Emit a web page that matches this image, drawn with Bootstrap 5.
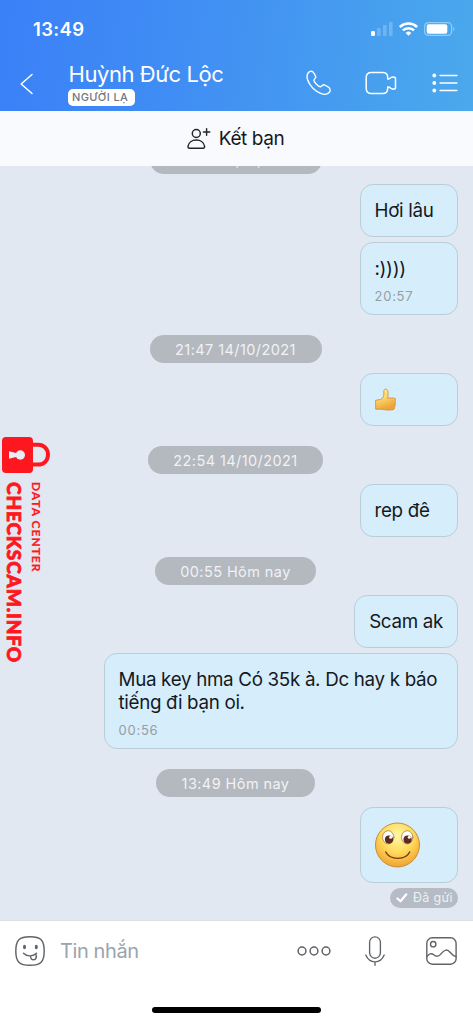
<!DOCTYPE html>
<html lang="vi">
<head>
<meta charset="utf-8">
<meta name="viewport" content="width=device-width, initial-scale=1">
<title>Huỳnh Đức Lộc</title>
<link href="https://cdn.jsdelivr.net/npm/bootstrap@5.3.0/dist/css/bootstrap.min.css" rel="stylesheet">
<style>
body{font-family:Inter,"Liberation Sans",sans-serif;background:#fff;color:#15191d}
svg{display:block;flex:none;fill:none;stroke-linecap:round;stroke-linejoin:round}
.screen{height:1024px;overflow:hidden}
.topbar{height:111px;background:linear-gradient(97deg,#3a80f8 0%,#4190f3 45%,#4ba9ec 100%);color:#fff}
.status{height:58px;padding:0 18px 0 33px}
.clock{font-size:18.5px;font-weight:600;line-height:24px;letter-spacing:.35px}
.titlebar{height:53px;padding:0 15px 0 20px}
.back{margin-top:15px}
.who{margin-left:35px;padding-top:3px}
.who-name{font-size:22px;line-height:26px;letter-spacing:-.43px;font-weight:400;padding-left:.5px}
.tag{width:67px;height:17px;margin-top:2px;border-radius:5px;background:#fff;color:#70777f;font-size:11px;line-height:17px;font-weight:500;letter-spacing:.4px;padding-left:4px}
.actions{padding-top:12px}
.friendbar{height:55px;background:#f9fafe;font-size:19px;letter-spacing:-.42px;padding:1px 2px 0 0}
.chat{height:754px;background:#e2e8f1;padding:0 15px 0 13px;overflow:hidden}
.stamp{height:28px;line-height:29px;border-radius:14px;background:#b4b8bf;color:#f0f2f5;font-size:14.5px;letter-spacing:.42px;margin:20px 0 10px;flex:none}
.stamp.first{margin-top:-20px}
.bubble{border:1px solid #b9ced7;border-radius:13px;background:#d6eefc;min-width:98.5px;padding:14px;font-size:18.8px;line-height:23px;letter-spacing:-.32px;flex:none}
.bubble + .bubble{margin-top:5px}
.bubble.timed{padding-bottom:8px}
.time{font-size:13px;line-height:20px;margin-top:6px;color:#969da1;letter-spacing:.75px}
.sent{width:68px;height:20px;border-radius:10px;background:#b5bcc5;color:#eef1f4;font-size:12.5px;letter-spacing:.3px;line-height:20px;margin-top:5px;padding-left:6px;gap:5px;flex:none}
.composer{height:104px;border-top:1px solid #dde1e6;padding-top:1px}
.tools{height:58px;padding:0 16px 0 15px;stroke:#606468}
.hint{font-size:20px;color:#9aa4ad;letter-spacing:-.4px;margin-left:15px}
.homebar{width:169px;height:6px;border-radius:3px;background:#000;margin-top:27px}
.mark-side{left:0;top:436px;color:#ff1720;font-family:Lato,sans-serif}
.mark-side .words{writing-mode:vertical-rl;height:190px;margin:8px 0 0 3px}
.brand-a{font-size:12px;line-height:16px;font-weight:700;letter-spacing:1px;-webkit-text-stroke:.2px #ff1720}
.brand-b{font-size:19px;line-height:22px;font-weight:900;letter-spacing:.86px;margin-right:3px;-webkit-text-stroke:.8px #ff1720}
</style>
</head>
<body>
<main class="screen position-relative d-flex flex-column">
  <header class="topbar flex-shrink-0">
    <div class="status d-flex align-items-center justify-content-between">
      <span class="clock">13:49</span>
      <div class="d-flex align-items-center">
        <svg width="22" height="14" viewBox="0 0 22 14"><g fill="#fff"><rect y="9" width="4" height="5" rx="1.2"/><g opacity=".22"><rect x="6" y="6" width="3.600" height="8" rx="1"/><rect x="12" y="3" width="3.600" height="11" rx="1"/><rect x="18" y="0" width="3.600" height="14" rx="1"/></g></g></svg>
        <svg width="19" height="14" viewBox="0 0 18 14" preserveAspectRatio="none" stroke="#fff" stroke-width="2.500" style="margin-left:6px;stroke-linecap:butt"><path d="M.8 5a11.6 11.6 0 0 1 16.400 0M3.700 8.400a7.400 7.400 0 0 1 10.600 0"/><path d="M6.300 10.900a3.800 3.800 0 0 1 5.400 0L9 13.700z" fill="#fff" stroke="none"/></svg>
        <svg width="31" height="14" viewBox="0 0 31 14" style="margin-left:6px"><rect x=".6" y=".6" width="27" height="12.800" rx="3.800" stroke="#fff" stroke-opacity=".42" stroke-width="1.200"/><rect x="2.700" y="2.300" width="20.600" height="9.400" rx="2" fill="#fff"/><path d="M29.300 5v4c1.500-.6 1.500-3.400 0-4z" fill="#fff" opacity=".45"/></svg>
      </div>
    </div>
    <div class="titlebar d-flex">
      <svg class="back" width="13" height="22" viewBox="0 0 13 22" stroke="#fff" stroke-width="1.500"><path d="M12 1.500 1.200 11 12 20.500"/></svg>
      <div class="who flex-grow-1">
        <div class="who-name text-nowrap">Huỳnh Đức Lộc</div>
        <div class="tag text-nowrap">NGƯỜI LẠ</div>
      </div>
      <div class="actions d-flex align-items-start">
        <svg width="26" height="26" viewBox="0 0 26 26" stroke="#fff" stroke-width="1.400"><path d="M2.200 2.800C3.300 1.300 5.500.8 7 2c1.200 1 2.100 2.900 2.700 4.600.5 1.400-1.900 2.400-1.800 3.900.1 1.700 4.500 6.100 6.300 6.200 1.600.1 2.300-2.400 3.900-1.900 1.800.6 4 1.800 5.100 3 1.200 1.400 1.400 3.700-.2 5-1.900 1.600-4.700 2-7.800.8C9.300 21.500 3.500 15.800 1.600 9.800.8 7.200.9 4.500 2.200 2.800z"/></svg>
        <svg width="32" height="24" viewBox="0 0 32 24" stroke="#fff" stroke-width="1.500" style="margin:1px 0 0 33px"><path d="M6.500 1.500h11.200c3.200 0 5 1.800 5 5V8c1.500.4 2.200-.6 3-1.300 1.400-1.200 2.500-.9 4-.4.5.2.8.5.8 1V17c0 .6-.4.800-.9.900-1.400.4-2.600.5-3.900-.7-.8-.7-1.500-1.700-3-1.200v1.500c0 3.200-1.800 5-5 5H6.500c-3.700 0-5.300-1.800-5.300-5v-11c0-3.200 1.800-5 5.300-5z"/></svg>
        <svg width="26" height="22" viewBox="0 0 26 22" stroke="#fff" stroke-width="1.300" style="margin:2px 0 0 35px"><path d="M8 3.500h17M8 11h17M8 18.500h17"/><g fill="#fff" stroke="none"><circle cx="2.300" cy="3.500" r="1.900"/><circle cx="2.300" cy="11" r="1.900"/><circle cx="2.300" cy="18.500" r="1.900"/></g></svg>
      </div>
    </div>
  </header>

  <div class="friendbar d-flex align-items-center justify-content-center flex-shrink-0">
    <svg width="24" height="22" viewBox="0 0 24 22" stroke="#222528" stroke-width="1.450" class="me-2"><circle cx="9.300" cy="5.500" r="4"/><path d="M2.400 20.200C1.300 20.200.9 19.300 1 18.300 1.500 14.500 5 12 9.300 12s7.800 2.500 8.300 6.300c.1 1-.3 1.900-1.400 1.900zM19.600.8v6.400M16.400 4h6.400"/></svg>
    <span>Kết bạn</span>
  </div>

  <section class="chat d-flex flex-column align-items-end flex-shrink-0">
    <div class="stamp first align-self-center text-center" style="width:172px">20:56 14/10/2021</div>
    <div class="bubble">Hơi lâu</div>
    <div class="bubble timed">:))))<div class="time">20:57</div></div>
    <div class="stamp align-self-center text-center" style="width:172px">21:47 14/10/2021</div>
    <div class="bubble">
      <svg width="22" height="23" viewBox="0 0 22 23"><defs><linearGradient id="thumb" x2=".3" y2="1"><stop stop-color="#fff0a0"/><stop offset=".5" stop-color="#fcd568"/><stop offset="1" stop-color="#eda436"/></linearGradient></defs><path d="M1 12.200 5.500 11.500C8.500 10 9.200 7.500 8.800 3.500 8.500.4 12.200.4 12.800 2.800c.6 2.600.2 5-.1 7.300h6.500c1.400 0 1.700 1.800.9 2.700.7.800.6 2.200-.1 2.800.6.9.4 2.200-.4 2.800.4 1.200-.1 2.900-1.600 3.300-3.600.7-8.200.3-11.400-.5H1z" fill="url(#thumb)" stroke="#d29040" stroke-width=".9"/><path d="M16.500 12.900h3M16.500 15.600h3M16.500 18.300h2.800" stroke="#e5a440" stroke-width=".6"/></svg>
    </div>
    <div class="stamp align-self-center text-center" style="width:175px">22:54 14/10/2021</div>
    <div class="bubble">rep đê</div>
    <div class="stamp align-self-center text-center" style="width:161px">00:55 Hôm nay</div>
    <div class="bubble">Scam ak</div>
    <div class="bubble timed text-nowrap" style="width:354.500px">Mua key hma Có 35k à. Dc hay k báo<br>tiếng đi bạn oi.<div class="time">00:56</div></div>
    <div class="stamp align-self-center text-center" style="width:159px">13:49 Hôm nay</div>
    <div class="bubble">
      <svg width="45" height="46" viewBox="0 0 45 46"><defs><radialGradient id="face" cx=".5" cy=".3" r=".72"><stop stop-color="#fff8a8"/><stop offset=".5" stop-color="#fedb5c"/><stop offset="1" stop-color="#efa02c"/></radialGradient></defs><circle cx="22.500" cy="23" r="22" fill="url(#face)" stroke="#c98b38"/><g fill="#fff" stroke="#a46b32" stroke-width=".7"><ellipse cx="13.200" cy="15.300" rx="5.700" ry="6.600"/><ellipse cx="32.200" cy="15.300" rx="5.700" ry="6.600"/></g><g fill="#5c2a1d"><circle cx="14" cy="17.600" r="4.100"/><circle cx="32.600" cy="17.600" r="4.100"/></g><g fill="#fff"><circle cx="15.700" cy="15.300" r="1.500"/><circle cx="34.300" cy="15.300" r="1.500"/></g><path d="M10.800 30c4 8.500 19.900 8.500 23.900 0" stroke="#7d321f" stroke-width="1.400"/></svg>
    </div>
    <div class="sent d-flex align-items-center">
      <svg width="12" height="10" viewBox="0 0 12 10" stroke="#fff" stroke-width="2.200"><path d="m1.500 5.500 3 2.800 5.800-7"/></svg>
      <span class="text-nowrap">Đã gửi</span>
    </div>
  </section>

  <footer class="composer flex-shrink-0">
    <div class="tools d-flex align-items-center">
      <svg width="30" height="30" viewBox="0 0 30 30" stroke-width="1.450"><path d="M15 .8c10.800 0 14.200 3.400 14.200 14.200S25.800 29.200 15 29.200.8 25.800.8 15 4.200.8 15 .8z"/><path d="M8.500 17.300c3.200 3.500 9.500 3.400 13 0M15.500 20.200c.2 2.300 1.300 3.600 3.100 3.600 2.300 0 3.300-2.300 2.300-5.700"/><g fill="#606468" stroke="none"><ellipse cx="9.500" cy="11" rx="1.500" ry="2.300"/><ellipse cx="21.300" cy="11" rx="1.500" ry="2.300"/></g></svg>
      <span class="hint flex-grow-1">Tin nhắn</span>
      <svg width="34" height="10" viewBox="0 0 34 10" stroke-width="1.500"><circle cx="5" cy="5" r="3.900"/><circle cx="17" cy="5" r="3.900"/><circle cx="29" cy="5" r="3.900"/></svg>
      <svg width="20" height="30" viewBox="0 0 20 30" stroke-width="1.350" style="margin-left:34px"><rect x="4.600" y=".8" width="10.800" height="21.400" rx="5.400"/><path d="M.8 19c2 4.800 5.300 6.800 9.200 6.800s7.200-2 9.200-6.800M10 25.800v3.500"/></svg>
      <svg width="31" height="28" viewBox="0 0 31 28" stroke-width="1.400" style="margin-left:41px"><rect x=".8" y=".8" width="29.300" height="26.400" rx="5.500"/><circle cx="7.200" cy="7.200" r="2.700"/><path d="M1 19.500c2-2.800 4.500-3.700 6.700-1.800 2.400 2.200 5.200 2 7.300-.8 3.500-4.800 6.300-5 9.500-1.200 2 2.400 3.600 3.300 5.500 3.800"/></svg>
    </div>
    <div class="homebar mx-auto"></div>
  </footer>

  <aside class="mark-side position-absolute">
    <svg width="51" height="38" viewBox="0 0 51 38"><rect x="2" y="1" width="31" height="36" rx="4" fill="#ff1720"/><path d="M33 8.800h5c6 0 10 4.200 10 9.900s-4 9.900-10 9.900h-5" stroke="#ff1720" stroke-width="4"/><path d="M9 15.200 17 17.300v3.400L9 22.800z" fill="#e9edf4"/><circle cx="20.300" cy="19" r="4.700" fill="#e9edf4"/></svg>
    <div class="words">
      <div class="brand-a">DATA CENTER</div>
      <div class="brand-b">CHECKSCAM.INFO</div>
    </div>
  </aside>
</main>
<script src="https://cdn.jsdelivr.net/npm/bootstrap@5.3.0/dist/js/bootstrap.bundle.min.js"></script>
</body>
</html>
